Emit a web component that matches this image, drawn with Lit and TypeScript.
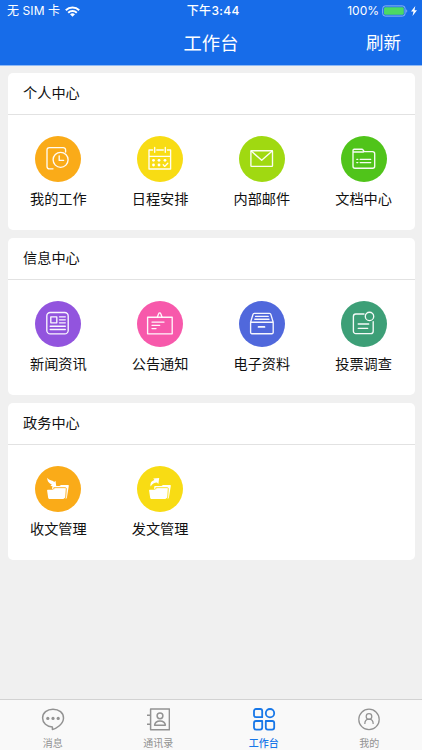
import { LitElement, html, svg, css, TemplateResult, SVGTemplateResult } from "lit";
import { customElement } from "lit/decorators.js";
import { classMap } from "lit/directives/class-map.js";

interface Entry { label: string; tone: string; icon: SVGTemplateResult; }
interface Section { title: string; entries: Entry[]; }

const openFolder = svg`
  <path class="fill" d="M17.2 23V20.9c0-.5.3-.8.8-.8h6.4l1.6-1.1h6.9c.7 0 1 .4.9 1l-2 12.3-1.4.5z"/>
  <path class="gap" d="M18.8 23V21.7h11.6c.7 0 1 .4.9 1l-.7 9.6"/>
  <path class="fill" d="M12.7 23.8h6.6l1.3-1h8.7c.5 0 .8.3.8.8l-.8 8.5c-.1.5-.4.8-.9.8H14.1c-.5 0-.8-.3-.9-.8l-1.1-7.5c0-.5.2-.8.6-.8z"/>`;

const sections: Section[] = [
  {
    title: "个人中心",
    entries: [
      { label: "我的工作", tone: "orange", icon: svg`
        <path d="M18 32.8H14.4a2.4 2.4 0 0 1-2.4-2.4V14a2.4 2.4 0 0 1 2.4-2.4H28.2a2.4 2.4 0 0 1 2.4 2.4v2"/>
        <circle cx="25.6" cy="23.8" r="7.5"/><path d="M24.2 19.8v4.6h4.4"/>` },
      { label: "日程安排", tone: "yellow", icon: svg`
        <path d="M15.6 14H12v19h21.6V14h-3.2M19.8 14h6.5M12 20.3h21.6M17.7 11.5v4.8M28.3 11.5v4.8"/>
        <g class="fill"><circle cx="16.5" cy="24.3" r="1.4"/><circle cx="22" cy="24.3" r="1.4"/><circle cx="28" cy="24.3" r="1.4"/><circle cx="16.5" cy="29" r="1.4"/><circle cx="22" cy="29" r="1.4"/></g>
        <path d="m26.2 28.8 1.6 1.6 3-3.2"/>` },
      { label: "内部邮件", tone: "lime", icon: svg`
        <rect x="11.9" y="14.7" width="21.6" height="15.6" rx=".6"/><path d="m12.2 15 10.5 9.3L33.2 15"/>` },
      { label: "文档中心", tone: "green", icon: svg`
        <path d="M12 17.7v-3.3c0-.8.4-1.2 1.2-1.2h7.6c.5 0 .9.2 1.2.6l1.2 1.8h8.3c1.3 0 2.2.9 2.2 2.2v12.4c0 1.2-.9 2-2 2H14c-1.2 0-2-.8-2-2V16h10.4"/>
        <path d="M15.8 23.3h1M19.2 23.3h10.5M15.8 26.6h1M19.2 26.6h10.5"/>` },
    ],
  },
  {
    title: "信息中心",
    entries: [
      { label: "新闻资讯", tone: "purple", icon: svg`
        <rect x="11.8" y="11.5" width="21.4" height="21.4" rx="3.5"/><rect x="15.8" y="15.8" width="6" height="6"/>
        <path d="M24.5 15.8h5.8M24.5 18.8h5.8M24.5 21.8h5.8M15.2 25.2h15.1M15.2 28.5h15.1"/>` },
      { label: "公告通知", tone: "pink", icon: svg`
        <rect x="10.6" y="16.2" width="24.6" height="16.6"/><path d="m20.4 16 1.2-3.2c.4-1.2 1.8-1.2 2.2 0L25 16M15 21.1h12M15 24.3h7.7M15 27.6h4"/>` },
      { label: "电子资料", tone: "blue", icon: svg`
        <path d="M11.6 21.2h22.6v10.4c0 .7-.4 1.1-1.1 1.1H12.7c-.7 0-1.1-.4-1.1-1.1zM11.6 21.2l2.3-7.6c.2-.8.6-1.2 1.4-1.2h15.2c.8 0 1.2.4 1.4 1.2l2.3 7.6M16.6 15.4h12.6M15.8 18.2h14.2"/><path class="bold" d="M19.5 25.9h6"/>` },
      { label: "投票调查", tone: "teal", icon: svg`
        <path d="M23 13H14.8a2.4 2.4 0 0 0-2.4 2.4v14.8a2.4 2.4 0 0 0 2.4 2.4h15a2.4 2.4 0 0 0 2.4-2.4V20.6M17.2 23h10.5M17.2 27.3h9.5"/>
        <circle cx="28.5" cy="15.4" r="4.2"/>` },
    ],
  },
  {
    title: "政务中心",
    entries: [
      { label: "收文管理", tone: "orange", icon: svg`${openFolder}
        <path class="fill" d="M12.3 11.8c1 1.6 2.2 2.2 4.2 2.6 1.2.3 2 .8 2.7 1.6l1.3-1.2.8 5.6-5.9-.4 1.4-1.4c-2.6-1-4.8-3.4-4.5-6.8z"/>` },
      { label: "发文管理", tone: "yellow", icon: svg`${openFolder}
        <path class="fill" d="M13.6 20.4c-.7-3 .8-5.4 3.9-6.3l-1.3-1.5 6-.5-.8 5.8-1.4-1.4c-2.8.1-4.7 1.4-6.4 3.9z"/>` },
    ],
  },
];

const tabs = [
  { label: "消息", active: false, icon: svg`
    <path d="M12 2.2C6 2.2 1.6 5.9 1.6 11c0 4.9 4.2 8.8 9.8 9.1v2.3c3.8-.8 11.1-5.2 11.1-11.4 0-5.1-4.4-8.8-10.5-8.8z"/>
    <g class="solid"><circle cx="6.8" cy="11.4" r="1.6"/><circle cx="12" cy="11.4" r="1.6"/><circle cx="17.2" cy="11.4" r="1.6"/></g>` },
  { label: "通讯录", active: false, icon: svg`
    <path d="M4.6 1.9h18.8v20.8H4.6zM1 8.3h4M1 17.2h4"/><circle cx="14" cy="8.8" r="2.9"/><path d="M8.6 18.2c.4-3 2.3-4.3 5.4-4.3s5 1.3 5.4 4.3z"/>` },
  { label: "工作台", active: true, icon: svg`
    <path d="M4 2h4.2a2 2 0 0 1 2 2v6.2H4a2 2 0 0 1-2-2V4a2 2 0 0 1 2-2z"/><circle cx="18" cy="6.2" r="4.2"/>
    <path d="M4 14h6.2v6.6a2 2 0 0 1-2 2H4a2 2 0 0 1-2-2V16a2 2 0 0 1 2-2zM13.8 14h6.4a2 2 0 0 1 2 2v4.6a2 2 0 0 1-2 2h-4.4a2 2 0 0 1-2-2z"/>` },
  { label: "我的", active: false, icon: svg`
    <g class="thin"><circle cx="12" cy="12.4" r="10.2"/><circle cx="12" cy="9.5" r="2.8"/><path d="M7.8 16.9c0-3 1.7-4.9 4.2-4.9s4.2 1.9 4.2 4.9"/></g>` },
];

@customElement("app-root")
export class AppRoot extends LitElement {
  static styles = css`
    :host {
      display: flex; flex-direction: column; box-sizing: border-box; height: 750px; width: 100%;
      background: #f0f0f0; color: #111;
      font-family: "Liberation Sans", "Noto Sans CJK SC", sans-serif;
    }
    .top { height: 65.5px; flex: none; background: #176ce9; color: #fff; border-bottom: 1px solid #8fb9f5; box-sizing: border-box; }
    .status { display: grid; grid-template-columns: 1fr auto 1fr; align-items: center; height: 22px; padding: 0 5px 0 7px; font-family: Inter, "Noto Sans CJK SC", sans-serif; font-size: 12px; line-height: 22px; }
    .left, .right { display: flex; align-items: center; }
    .left { letter-spacing: .1px; gap: 5px; }
    .right { justify-content: flex-end; gap: 3px; }
    .time { font-weight: 500; letter-spacing: .35px; padding-left: 2.5px; }
    .wifi { width: 15px; height: 11px; fill: none; stroke: #fff; stroke-width: 2; }
    .wifi .core { fill: #fff; stroke: none; }
    .battery { width: 26px; height: 12px; }
    .bolt { width: 6px; height: 10px; fill: #fff; }
    .bar { display: grid; grid-template-columns: 1fr auto 1fr; align-items: center; height: 43px; padding: 0 21px; }
    .heading { grid-column: 2; font-size: 18.3px; line-height: 43px; }
    .refresh { justify-self: end; font-size: 17.5px; line-height: 43px; }
    .content { flex: 1; display: flex; flex-direction: column; gap: 7.5px; padding: 7px 7.5px; }
    .card { box-sizing: border-box; height: 157.5px; background: #fff; border-radius: 5px; }
    .title { box-sizing: border-box; height: 42.5px; padding-left: 15.5px; border-bottom: 1px solid #e2e2e2; font-size: 14.2px; line-height: 41px; }
    .grid { display: grid; grid-template-columns: repeat(4, 1fr); padding-top: 21px; }
    .entry { display: flex; flex-direction: column; align-items: center; font-size: 14.2px; line-height: 20px; gap: 7px; }
    .disc { width: 46px; height: 46px; border-radius: 50%; }
    .glyph { display: block; width: 46px; height: 46px; fill: none; stroke: #fff; stroke-opacity: .95; stroke-width: 1.35; stroke-linejoin: round; stroke-linecap: round; }
    .glyph .fill { fill: #fff; stroke: none; }
    .glyph .bold { stroke-width: 1.7; }
    .glyph .gap { stroke: #faab18; stroke-width: .9; stroke-opacity: 1; }
    .yellow .gap { stroke: #f8dc14; }
    .orange { background: #faab18; }
    .yellow { background: #f8dc14; }
    .lime { background: #a0d911; }
    .green { background: #50c41a; }
    .purple { background: #9254de; }
    .pink { background: #f759ab; }
    .blue { background: #5068dc; }
    .teal { background: #3d9f77; }
    .tabs { flex: none; display: grid; grid-template-columns: repeat(4, 1fr); box-sizing: border-box; height: 51px; background: #f9f9f9; border-top: 1px solid #d2d2d2; }
    .tab { display: flex; flex-direction: column; align-items: center; padding-top: 7px; color: #929292; font-size: 10px; line-height: 14px; gap: 6px; }
    .tab.active { color: #1777e8; font-weight: 500; }
    .mark { width: 24px; height: 24px; flex: none; fill: none; stroke: currentColor; stroke-width: 1.5; stroke-linejoin: round; }
    .active .mark { stroke-width: 1.8; }
    .mark .solid { fill: currentColor; stroke: none; }
    .mark .thin { stroke-width: 1.25; }
  `;

  private renderSection(s: Section): TemplateResult {
    return html`<section class="card">
      <div class="title">${s.title}</div>
      <div class="grid">
        ${s.entries.map((e) => html`<div class="entry">
          <div class="disc ${e.tone}"><svg class="glyph" viewBox="0 0 46 46">${e.icon}</svg></div>
          <span>${e.label}</span>
        </div>`)}
      </div>
    </section>`;
  }

  render() {
    return html`
      <header class="top">
        <div class="status">
          <div class="left"><span>无 SIM 卡</span>
            <svg class="wifi" viewBox="0 0 15 11"><path d="M.8 4.2a9.6 9.6 0 0 1 13.4 0M3.2 6.7a6.2 6.2 0 0 1 8.6 0"/><path class="core" d="M5 8.3a3.7 3.7 0 0 1 5 0L7.5 10.8z"/></svg>
          </div>
          <div class="time">下午3:44</div>
          <div class="right"><span>100%</span>
            <svg class="battery" viewBox="0 0 26 12"><rect x=".7" y=".9" width="22.4" height="10.2" rx="2.6" fill="none" stroke="#8db5f3" stroke-width="1"/><rect x="2" y="2.2" width="19.8" height="7.6" rx="1.4" fill="#4cd964"/><path d="M24.3 4.3c1.3.4 1.3 3 0 3.4z" fill="#8db5f3"/></svg>
            <svg class="bolt" viewBox="0 0 6 10"><path d="M4.3 0 0 5.6h2.5L1.5 10 6 4.2H3.5z"/></svg>
          </div>
        </div>
        <div class="bar"><div class="heading">工作台</div><div class="refresh">刷新</div></div>
      </header>
      <main class="content">${sections.map((s) => this.renderSection(s))}</main>
      <nav class="tabs">
        ${tabs.map((t) => html`<div class=${classMap({ tab: true, active: t.active })}>
          <svg class="mark" viewBox="0 0 24 24">${t.icon}</svg><span>${t.label}</span>
        </div>`)}
      </nav>`;
  }
}
